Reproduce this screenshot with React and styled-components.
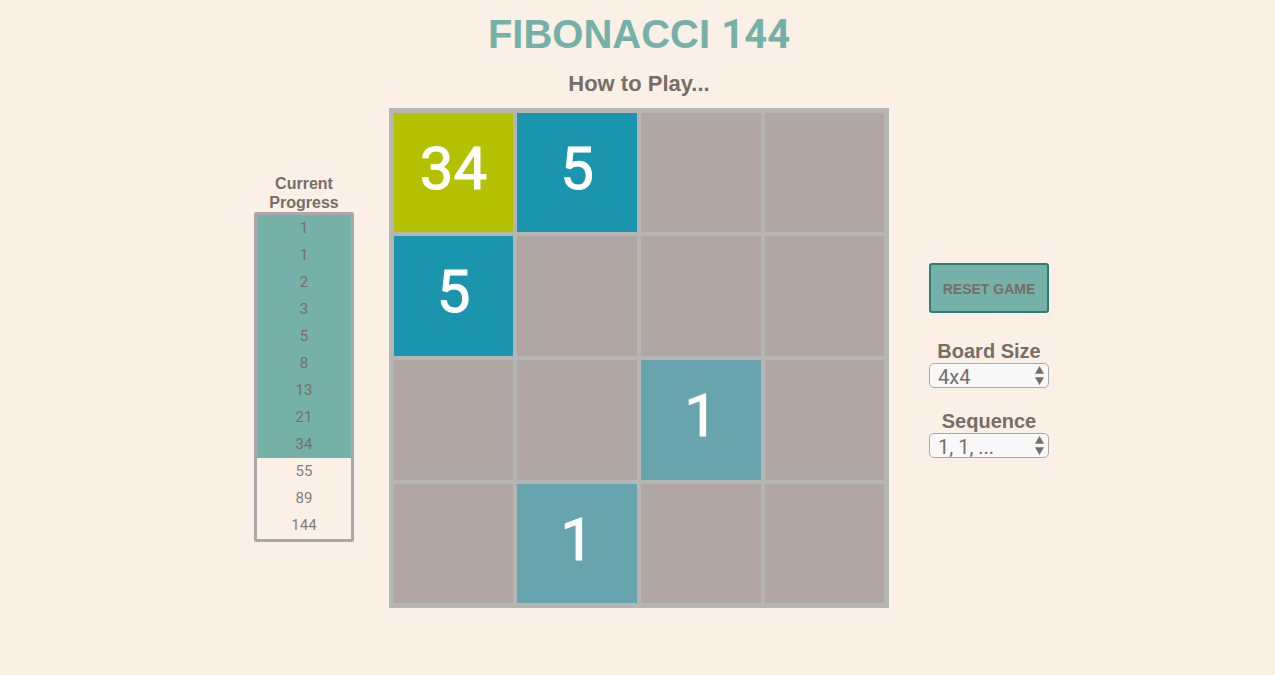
import React, { useState } from "react";
import styled, { createGlobalStyle } from "styled-components";

const GlobalStyle = createGlobalStyle`
  *, *::before, *::after { box-sizing: border-box; }
  body {
    margin: 0;
    background: #faf0e6;
    color: #776e65;
    font-family: "Liberation Sans", Arial, sans-serif;
  }
`;

const Page = styled.div`
  display: flex;
  flex-direction: column;
  align-items: center;
  padding: 10px 0 24px 3px;
`;

const Title = styled.h1`
  margin: 0 0 13px;
  color: #75b1a9;
  font-size: 40px;
  line-height: 48px;
  text-transform: uppercase;
`;

const Digits = styled.span`
  font-family: Roboto, sans-serif;
  line-height: 1;
`;

const HowTo = styled.h2`
  margin: 0 0 11px;
  font-size: 22px;
  line-height: 26px;
`;

const Game = styled.main`
  display: grid;
  grid-template-columns: 1fr minmax(0, 500px) 1fr;
  align-items: center;
  width: 100%;
`;

const Progress = styled.section`
  justify-self: end;
  width: 100px;
  margin-right: 35px;
  text-align: center;
`;

const ProgressTitle = styled.h3`
  margin: 0;
  font-size: 16px;
  line-height: 19px;
`;

const ProgressList = styled.ol`
  margin: 0;
  padding: 0;
  list-style: none;
  border: 3px solid #a9a9a9;
  border-radius: 2px;
`;

const ProgressItem = styled.li`
  background: ${(p) => (p.$reached ? "#75b1a9" : "transparent")};
  color: ${(p) => (p.$reached ? "#776e65" : "#808080")};
  font-family: Roboto, sans-serif;
  font-size: 15px;
  line-height: 27px;
`;

const Board = styled.div`
  display: grid;
  grid-template: 119fr 120fr 120fr 119fr / 119fr 120fr 120fr 119fr;
  gap: 4px;
  aspect-ratio: 1;
  padding: 5px;
  background: #b5b5b3;
`;

const tileColors = { 1: "#68a4ad", 5: "#1b95ad", 34: "#b3c100" };

const Tile = styled.div`
  display: flex;
  align-items: center;
  justify-content: center;
  padding: 0 0 8px;
  background: ${(p) => tileColors[p.$value] || "#b0a7a5"};
  color: #fff;
  font-family: Roboto, sans-serif;
  font-size: 60px;
  line-height: 70px;
  -webkit-text-stroke: 1px #fff;
`;

const Controls = styled.aside`
  display: flex;
  flex-direction: column;
  width: 120px;
  margin-left: 40px;
  padding-top: 5px;
`;

const ResetButton = styled.button`
  height: 50px;
  margin: 0 0 26px;
  padding: 2px 0 0;
  border: 2px solid #2b7d75;
  border-radius: 3px;
  background: #75b1a9;
  color: #776e65;
  font: bold 14px "Liberation Sans", Arial, sans-serif;
  text-transform: uppercase;
  cursor: pointer;
`;

const Field = styled.div`
  text-align: center;
  & + & { margin-top: 21px; }
`;

const FieldLabel = styled.label`
  display: block;
  font-size: 20px;
  font-weight: bold;
  line-height: 24px;
`;

const SelectBox = styled.div`
  position: relative;
  height: 25px;
`;

const Select = styled.select`
  appearance: none;
  display: block;
  width: 100%;
  height: 25px;
  margin: 0;
  padding: 1px 20px 0 8px;
  border: 1px solid #a9a9a9;
  border-radius: 5px;
  background: #f8f8f8;
  color: #776e65;
  font: 20px Roboto, sans-serif;
`;

const Arrows = styled.svg`
  position: absolute;
  top: 3px;
  right: 5px;
  pointer-events: none;
  fill: #776e65;
`;

function SelectField({ id, label, options }) {
  return (
    <Field>
      <FieldLabel htmlFor={id}>{label}</FieldLabel>
      <SelectBox>
        <Select id={id}>
          {options.map((o) => (
            <option key={o}>{o}</option>
          ))}
        </Select>
        <Arrows width="9" height="19" viewBox="0 0 9 19" aria-hidden="true">
          <path d="M4.5 0 9 7.7H0zM0 11.2H9L4.5 19z" />
        </Arrows>
      </SelectBox>
    </Field>
  );
}

const sequence = [1, 1, 2, 3, 5, 8, 13, 21, 34, 55, 89, 144];
const start = [34, 5, 0, 0, 5, 0, 0, 0, 0, 0, 1, 0, 0, 1, 0, 0];
const fresh = [0, 0, 0, 0, 0, 1, 0, 0, 0, 0, 1, 0, 0, 0, 0, 0];

export default function App() {
  const [tiles, setTiles] = useState(start);
  const best = Math.max(...tiles);

  return (
    <>
      <GlobalStyle />
      <Page>
        <Title>
          Fibonacci <Digits>144</Digits>
        </Title>
        <HowTo>How to Play...</HowTo>
        <Game>
          <Progress>
            <ProgressTitle>Current Progress</ProgressTitle>
            <ProgressList>
              {sequence.map((n, i) => (
                <ProgressItem key={i} $reached={n <= best}>
                  {n}
                </ProgressItem>
              ))}
            </ProgressList>
          </Progress>
          <Board>
            {tiles.map((v, i) => (
              <Tile key={i} $value={v}>
                {v || null}
              </Tile>
            ))}
          </Board>
          <Controls>
            <ResetButton type="button" onClick={() => setTiles(fresh)}>
              Reset Game
            </ResetButton>
            <SelectField id="board-size" label="Board Size" options={["4x4", "5x5", "6x6"]} />
            <SelectField id="sequence" label="Sequence" options={["1, 1, ...", "1, 2, ..."]} />
          </Controls>
        </Game>
      </Page>
    </>
  );
}
